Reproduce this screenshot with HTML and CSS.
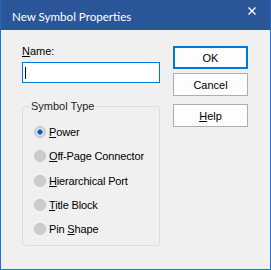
FILE: index.html
```html
<!DOCTYPE html>
<html>
<head>
<meta charset="utf-8">
<link rel="stylesheet" href="styles.css">
</head>
<body>
<div class="window">
  <div class="titlebar">
    <span class="title">New Symbol Properties</span>
    <svg class="close" width="8" height="8" viewBox="0 0 8 8"><path d="M0.5 0.5 L7.5 7.5 M7.5 0.5 L0.5 7.5" stroke="#fff" stroke-width="1.4" fill="none"/></svg>
  </div>
  <div class="content">
    <div class="left">
      <label class="label"><u>N</u>ame:</label>
      <div class="textbox"><span class="caret"></span></div>
      <fieldset class="group">
        <legend class="legend">Symbol Type</legend>
        <div class="radio checked"><span class="circle"></span><span><u>P</u>ower</span></div>
        <div class="radio"><span class="circle"></span><span><u>O</u>ff-Page Connector</span></div>
        <div class="radio"><span class="circle"></span><span><u>H</u>ierarchical Port</span></div>
        <div class="radio"><span class="circle"></span><span><u>T</u>itle Block</span></div>
        <div class="radio"><span class="circle"></span><span>Pin <u>S</u>hape</span></div>
      </fieldset>
    </div>
    <div class="right">
      <button class="btn default">OK</button>
      <button class="btn">Cancel</button>
      <button class="btn help"><u>H</u>elp</button>
    </div>
  </div>
</div>
</body>
</html>
```
FILE: styles.css
```css
html, body {
  margin: 0;
  padding: 0;
  background: #ffffff;
}
.window {
  width: 271px;
  height: 270px;
  box-sizing: border-box;
  display: flex;
  flex-direction: column;
  font-family: "Liberation Sans", Arial, sans-serif;
  font-size: 11px;
  color: #000;
}
.titlebar {
  height: 30px;
  flex: none;
  background: #2b579a;
  display: flex;
  align-items: center;
  justify-content: space-between;
  padding: 0 14px 0 12px;
  border-left: 1px solid #2e62b6;
  border-right: 1px solid #2e62b6;
  box-sizing: border-box;
}
.title {
  font-family: Lato, "Noto Sans", sans-serif;
  font-size: 11.6px;
  color: #ffffff;
  margin-top: 3px;
  margin-left: -1px;
}
.close {
  display: block;
  margin-top: -8px;
}
.content {
  flex: 1;
  display: flex;
  background: #f0f0f0;
  border: 1px solid #1e6fd6;
  border-top: none;
  padding: 15px 0 0 21px;
  gap: 13px;
}
.left {
  width: 138px;
  display: flex;
  flex-direction: column;
}
.label {
  line-height: 13px;
  height: 13px;
}
.textbox {
  margin-top: 4px;
  height: 21px;
  box-sizing: border-box;
  border: 1px solid #0078d7;
  background: #ffffff;
  padding: 4px 0 0 2px;
}
.caret {
  display: block;
  width: 1px;
  height: 12px;
  background: #000;
}
.group {
  margin: 17px 0 0 0;
  padding: 7px 0 4px 11px;
  border: 1px solid #dcdcdc;
  border-radius: 3px;
  min-width: 0;
}
.legend {
  padding: 0 2px;
  margin-left: -5px;
  line-height: 13px;
  color: #1e1e1e;
}
.radio {
  height: 24.25px;
  display: flex;
  align-items: center;
  gap: 3px;
  letter-spacing: -0.15px;
}
.circle {
  width: 12px;
  height: 12px;
  box-sizing: border-box;
  border-radius: 50%;
  background: #cccccc;
  border: 1px solid #c4c4c4;
  flex: none;
}
.radio.checked .circle {
  background: radial-gradient(circle, #0a64c8 0 2.4px, #e6e6e6 2.9px 3.4px, #d2d2d2 3.9px);
}
.right {
  width: 75px;
  margin-top: 1px;
  display: flex;
  flex-direction: column;
}
.btn {
  width: 75px;
  height: 23px;
  box-sizing: border-box;
  background: #fdfdfd;
  border: 1px solid #adadad;
  font-family: "Liberation Sans", Arial, sans-serif;
  font-size: 11px;
  color: #000;
  padding: 0;
  margin: 0 0 4px 0;
}
.btn.default {
  border: 1px solid #0078d7;
  box-shadow: inset 0 0 0 1px #0078d7;
}
.btn.help {
  margin-top: 4px;
}
```
